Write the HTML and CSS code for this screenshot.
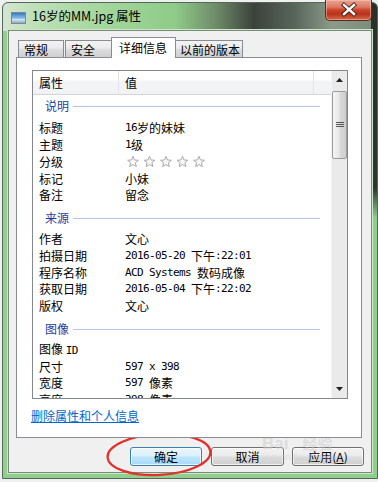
FILE: index.html
```html
<!DOCTYPE html>
<html lang="zh-CN">
<head>
<meta charset="utf-8">
<title>16岁的MM.jpg 属性</title>
<link rel="stylesheet" href="styles.css">
</head>
<body>
<div class="window">
  <div class="titlebar">
    <svg class="ticon" width="15" height="12" viewBox="0 0 15 12">
      <defs>
        <linearGradient id="sky" x1="0" y1="0" x2="0" y2="1">
          <stop offset="0" stop-color="#2f6fc0"/>
          <stop offset="0.55" stop-color="#8fc4ec"/>
          <stop offset="0.56" stop-color="#e8f2f8"/>
          <stop offset="1" stop-color="#7fa0b8"/>
        </linearGradient>
      </defs>
      <rect x="0.5" y="0.5" width="14" height="11" fill="url(#sky)" stroke="#7d8a94"/>
    </svg>
    <span class="title">16岁的MM.jpg 属性</span>
    <div class="close">
      <svg width="47" height="21" viewBox="0 0 47 21">
        <path d="M19 6 L29 15 M29 6 L19 15" stroke="#3a1d18" stroke-width="4.2" stroke-linecap="square"/>
        <path d="M19 6 L29 15 M29 6 L19 15" stroke="#ffffff" stroke-width="2.4" stroke-linecap="square"/>
      </svg>
    </div>
  </div>
  <div class="client">
    <div class="tabs">
      <div class="tab t1">常规</div>
      <div class="tab t2">安全</div>
      <div class="tab sel">详细信息</div>
      <div class="tab t4">以前的版本</div>
    </div>
    <div class="panel">
      <div class="list">
        <div class="lmain">
          <div class="lhead">
            <div class="hc c1">属性</div>
            <div class="hc c2">值</div>
            <div class="hc c3"></div>
          </div>
          <div class="lbody">
            <div class="grp first"><span>说明</span><i></i></div>
            <div class="row"><span class="k">标题</span><span class="v"><span class="en">16</span>岁的妹妹</span></div>
            <div class="row"><span class="k">主题</span><span class="v"><span class="en">1</span>级</span></div>
            <div class="row"><span class="k">分级</span><span class="v">
              <svg class="stars" width="84" height="12" viewBox="0 0 84 12">
                <defs>
                  <polygon id="st" points="6,0.4 7.47,3.98 11.4,4.25 8.38,6.77 9.35,10.6 6,8.5 2.65,10.6 3.62,6.77 0.6,4.25 4.53,3.98" fill="#fafafa" stroke="#a9a9a9" stroke-width="1" stroke-linejoin="round"/>
                </defs>
                <use href="#st" x="0"/>
                <use href="#st" x="16.5"/>
                <use href="#st" x="33"/>
                <use href="#st" x="49.5"/>
                <use href="#st" x="66"/>
              </svg></span></div>
            <div class="row"><span class="k">标记</span><span class="v">小妹</span></div>
            <div class="row"><span class="k">备注</span><span class="v">留念</span></div>
            <div class="grp"><span>来源</span><i></i></div>
            <div class="row"><span class="k">作者</span><span class="v">文心</span></div>
            <div class="row"><span class="k">拍摄日期</span><span class="v"><span class="en">2016-05-20 </span>下午<span class="en">:22:01</span></span></div>
            <div class="row"><span class="k">程序名称</span><span class="v"><span class="en">ACD Systems </span>数码成像</span></div>
            <div class="row"><span class="k">获取日期</span><span class="v"><span class="en">2016-05-04 </span>下午<span class="en">:22:02</span></span></div>
            <div class="row"><span class="k">版权</span><span class="v">文心</span></div>
            <div class="grp"><span>图像</span><i></i></div>
            <div class="row"><span class="k">图像 <span class="en">ID</span></span><span class="v"></span></div>
            <div class="row"><span class="k">尺寸</span><span class="v"><span class="en">597 x 398</span></span></div>
            <div class="row"><span class="k">宽度</span><span class="v"><span class="en">597 </span>像素</span></div>
            <div class="row"><span class="k">高度</span><span class="v"><span class="en">398 </span>像素</span></div>
          </div>
        </div>
        <div class="sb">
          <div class="sbtn">
            <svg width="7" height="4" viewBox="0 0 7 4"><polygon points="3.5,0 7,4 0,4" fill="#222"/></svg>
          </div>
          <div class="thumb">
            <svg width="8" height="6" viewBox="0 0 8 6"><path d="M0 0.5H8M0 2.5H8M0 4.5H8" stroke="#555" stroke-width="1"/></svg>
          </div>
          <div class="track"></div>
          <div class="sbtn">
            <svg width="7" height="4" viewBox="0 0 7 4"><polygon points="0,0 7,0 3.5,4" fill="#222"/></svg>
          </div>
        </div>
      </div>
      <a class="link" href="#">删除属性和个人信息</a>
    </div>
    <div class="buttons">
      <div class="btn ok">确定</div>
      <div class="btn cancel">取消</div>
      <div class="btn apply">应用(<u>A</u>)</div>
    </div>
  </div>
</div>
<div class="wm"><span class="wm1">Bai</span><span class="wm2">经验</span><span class="wm3">jingyan.baidu.com</span></div>
<svg class="ring" width="378" height="482" viewBox="0 0 378 482">
  <ellipse cx="159" cy="454.5" rx="51.5" ry="20.5" transform="rotate(-3 159 454.5)" fill="none" stroke="#e3302c" stroke-width="2.2"/>
</svg>
</body>
</html>
```
FILE: styles.css
```css
html, body {
  margin: 0;
  padding: 0;
}
body {
  width: 378px;
  height: 482px;
  overflow: hidden;
  position: relative;
  background: #eef2ee;
  font-family: "Noto Sans CJK SC", "Noto Sans", sans-serif;
  font-size: 12px;
  color: #000;
}
.window {
  box-sizing: border-box;
  margin: 2px 0 0 2px;
  width: 376px;
  height: 477px;
  border: 1px solid #56665a;
  border-radius: 6px 6px 0 0;
  padding: 0 5px 5px 5px;
  display: flex;
  flex-direction: column;
  background:
    linear-gradient(to bottom, #2b302b 0, #2e352e 185px, #8fcf8b 215px) right top / 6px 100% no-repeat,
    linear-gradient(to right, #d5e5d0 0, #bfe0b8 8%, #a2d69b 28%, #8fcb89 46%, #6e8b69 57%, #3c423b 67%, #57665a 78%, #8c9a89 88%, #7b8a79 100%) left top / 100% 28px no-repeat,
    #90cf8c;
}
.titlebar {
  height: 27px;
  display: flex;
  align-items: flex-start;
  padding-left: 3px;
}
.ticon {
  margin-top: 9px;
  flex: none;
}
.title {
  margin-left: 6px;
  margin-top: 6px;
  line-height: 14px;
  font-size: 12.5px;
  color: #000;
}
.close {
  margin-left: auto;
  margin-top: -3px;
  width: 47px;
  height: 21px;
  box-sizing: border-box;
  border: 1px solid #5e2a20;
  border-top: none;
  border-radius: 0 0 5px 5px;
  background: linear-gradient(to bottom, #e8a493 0, #dc7a62 35%, #c8442a 50%, #b9321b 70%, #d36a4c 100%);
  box-shadow: inset 0 0 0 1px rgba(255, 210, 200, 0.45);
}
.close svg {
  display: block;
  margin: -1px 0 0 -1px;
}
.client {
  box-sizing: border-box;
  flex: 1;
  background: #f0f0f0;
  border: 1px solid #7b8b79;
  box-shadow: 0 0 0 1px #cde6ca;
  display: flex;
  flex-direction: column;
  padding: 6px 0 0 7px;
}
.tabs {
  display: flex;
  align-items: flex-end;
  height: 20px;
  margin-left: 2px;
  position: relative;
  z-index: 2;
}
.tab {
  box-sizing: border-box;
  height: 17px;
  border: 1px solid #898c95;
  border-bottom: none;
  background: linear-gradient(to bottom, #f3f3f3 0, #ebebeb 45%, #dedede 50%, #cfcfcf 100%);
  line-height: 15px;
  padding-top: 1px;
  white-space: nowrap;
}
.t1 { width: 46px; padding-left: 5px; }
.t2 { width: 47px; padding-left: 5px; margin-left: 1px; }
.sel {
  width: 65px;
  height: 21px;
  margin-left: -1px;
  margin-bottom: -1px;
  background: #fff;
  padding-left: 7px;
  padding-top: 2px;
  line-height: 16px;
}
.t4 { width: 67px; padding-left: 4px; margin-left: 0; border-left: none; }
.panel {
  box-sizing: border-box;
  width: 346px;
  height: 381px;
  border: 1px solid #898c95;
  background: #fff;
  padding: 12px 0 0 15px;
  position: relative;
  z-index: 1;
}
.list {
  box-sizing: border-box;
  width: 316px;
  height: 329px;
  border: 1px solid #828790;
  display: flex;
}
.lmain {
  width: 298px;
  overflow: hidden;
}
.lhead {
  box-sizing: border-box;
  height: 24px;
  display: flex;
  background: linear-gradient(to bottom, #ffffff 0, #ffffff 40%, #f4f5f7 42%, #f1f2f4 100%);
  border-bottom: 1px solid #d5d5d5;
}
.hc {
  box-sizing: border-box;
  padding-left: 6px;
  padding-top: 3px;
  line-height: 18px;
  border-right: 1px solid #e3e4e6;
}
.c1 { width: 86px; }
.c2 { width: 195px; }
.c3 { flex: 1; border-right: none; }
.lbody {
  display: flex;
  flex-direction: column;
}
.grp {
  height: 22px;
  display: flex;
  align-items: center;
  padding-left: 12px;
  margin: 3px 0 2px 0;
  color: #1e3f9e;
}
.grp.first { margin: 0 0 3px 0; }
.grp span { line-height: 14px; }
.grp i {
  flex: 1;
  height: 1px;
  background: #b7c4e3;
  margin: 1px 11px 0 4px;
}
.row {
  height: 16.75px;
  display: flex;
  align-items: center;
  line-height: 14px;
  white-space: nowrap;
}
.k {
  box-sizing: border-box;
  width: 92px;
  padding-left: 6px;
  flex: none;
}
.v {
  display: flex;
  align-items: center;
}
.en {
  font-family: "DejaVu Sans Mono", "Liberation Mono", monospace;
  font-size: 11px;
  letter-spacing: -0.62px;
  white-space: pre;
}
.stars {
  display: block;
  margin-left: 2px;
}
.sb {
  width: 16px;
  display: flex;
  flex-direction: column;
  background: #eaeaea;
  border-left: 1px solid #f4f4f4;
  box-sizing: border-box;
}
.sbtn {
  height: 18px;
  display: flex;
  align-items: center;
  justify-content: center;
  flex: none;
}
.thumb {
  box-sizing: border-box;
  height: 68px;
  margin: 2px 0 0 0;
  border: 1px solid #9b9b9b;
  border-radius: 2px;
  background: linear-gradient(to right, #f5f5f5 0, #e8e8e8 45%, #d9d9d9 55%, #cfcfcf 100%);
  display: flex;
  align-items: center;
  justify-content: center;
  flex: none;
}
.track { flex: 1; }
.link {
  display: block;
  margin: 10px 0 0 -1px;
  line-height: 14px;
  color: #0066cc;
  text-decoration: underline;
  width: max-content;
}
.buttons {
  display: flex;
  margin-top: 9px;
  padding-left: 114px;
}
.btn {
  box-sizing: border-box;
  width: 72px;
  height: 19px;
  border: 1px solid #707070;
  border-radius: 3px;
  background: linear-gradient(to bottom, #f2f2f2 0, #ebebeb 48%, #dddddd 52%, #cfcfcf 100%);
  text-align: center;
  line-height: 17px;
  box-shadow: inset 0 0 0 1px rgba(255, 255, 255, 0.7);
}
.btn u { text-decoration: underline; }
.ok {
  border-color: #3c7fb1;
  background: linear-gradient(to bottom, #eaf6fd 0, #d9f0fc 48%, #bee6fd 52%, #a7d9f5 100%);
}
.cancel { margin-left: 9px; width: 73px; }
.apply { margin-left: 8px; }
.wm {
  position: absolute;
  left: 262px;
  top: 432px;
  width: 100px;
  pointer-events: none;
  color: rgba(205, 205, 205, 0.55);
  font-family: "Liberation Sans", sans-serif;
}
.wm1 { font-size: 17px; font-weight: bold; }
.wm2 { font-size: 15px; font-weight: bold; margin-left: 14px; font-family: "Noto Sans CJK SC", sans-serif; }
.wm3 { display: block; font-size: 9px; margin-top: -2px; }
.ring {
  position: absolute;
  left: 0;
  top: 0;
  pointer-events: none;
}
```
